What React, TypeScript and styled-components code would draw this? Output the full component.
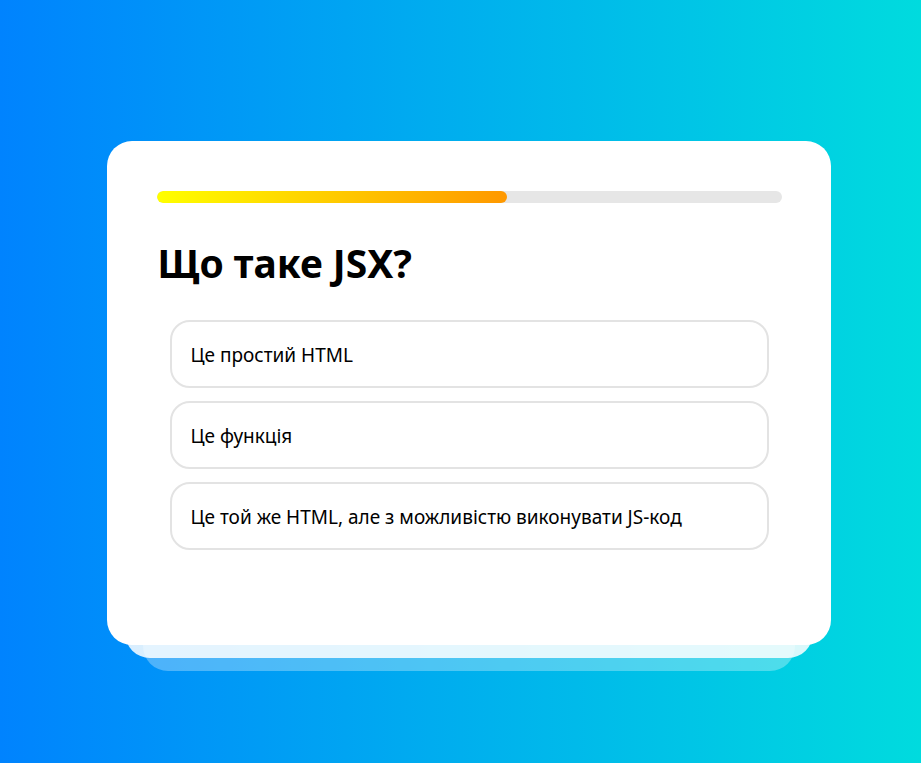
import React from "react";
import styled, { createGlobalStyle } from "styled-components";

const Global = createGlobalStyle`
  html, body { margin: 0; padding: 0; }
  body {
    font-family: "Noto Sans", "Open Sans", sans-serif;
    background: linear-gradient(90deg, #0083fe 0%, #00dbde 100%);
    min-height: 763px;
  }
`;

const Page = styled.div`
  box-sizing: border-box;
  min-height: 763px;
  display: flex;
  justify-content: center;
  align-items: flex-start;
  padding: 141px 0 0 16px;
`;

const Stack = styled.div`
  position: relative;
  width: 724px;
`;

const Layer = styled.div<{ $depth: number; $alpha: number }>`
  position: absolute;
  left: ${(p) => 18 * p.$depth}px;
  right: ${(p) => 18 * p.$depth}px;
  bottom: ${(p) => -13 * p.$depth}px;
  height: 120px;
  border-radius: 25px;
  background: rgba(255, 255, 255, ${(p) => p.$alpha});
`;

const Card = styled.div`
  position: relative;
  box-sizing: border-box;
  height: 504px;
  background: #fff;
  border-radius: 25px;
  padding: 50px 49px 50px 50px;
`;

const Progress = styled.div`
  height: 12px;
  border-radius: 6px;
  background: #e6e6e6;
  overflow: hidden;
`;

const Fill = styled.div`
  height: 100%;
  border-radius: 6px;
  background: linear-gradient(90deg, #ffff00 0%, #ff9800 100%);
`;

const Title = styled.h1`
  margin: 33px 0 30px 1px;
  font-size: 39px;
  font-weight: 700;
  line-height: 54px;
  color: #000;
`;

const Options = styled.ul`
  list-style: none;
  margin: 0;
  padding: 0 13px;
  display: flex;
  flex-direction: column;
  gap: 13px;
`;

const Option = styled.li`
  box-sizing: border-box;
  height: 68px;
  display: flex;
  align-items: center;
  padding: 2px 19px 0;
  border: 2px solid #e3e3e3;
  border-radius: 20px;
  font-size: 19px;
  color: #000;
  cursor: pointer;
`;

const options = [
  "Це простий HTML",
  "Це функція",
  "Це той же HTML, але з можливістю виконувати JS-код",
];

export default function App() {
  const progress = 56;
  return (
    <>
      <Global />
      <Page>
        <Stack>
          <Layer $depth={2} $alpha={0.3} />
          <Layer $depth={1} $alpha={0.85} />
          <Card>
            <Progress>
              <Fill style={{ width: `${progress}%` }} />
            </Progress>
            <Title>Що таке JSX?</Title>
            <Options>
              {options.map((o) => (
                <Option key={o}>{o}</Option>
              ))}
            </Options>
          </Card>
        </Stack>
      </Page>
    </>
  );
}
